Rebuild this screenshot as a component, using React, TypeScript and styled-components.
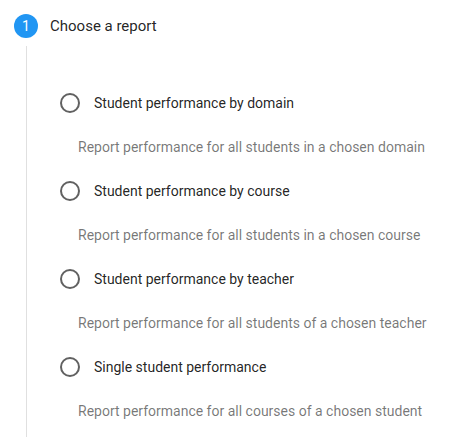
import React from 'react';
import styled, { createGlobalStyle } from 'styled-components';

const GlobalStyle = createGlobalStyle`
  html, body {
    margin: 0;
    padding: 0;
    background: #ffffff;
    font-family: Roboto, "Noto Sans", Arial, sans-serif;
  }
`;

const Stepper = styled.div`
  width: 449px;
  height: 437px;
  overflow: hidden;
  display: flex;
  flex-direction: column;
`;

const StepHeader = styled.div`
  display: flex;
  align-items: center;
  gap: 12px;
  padding: 14px 0 0 14px;
`;

const StepIndex = styled.div`
  width: 24px;
  height: 24px;
  border-radius: 50%;
  background: #2196f3;
  color: #ffffff;
  font-size: 14px;
  display: flex;
  align-items: center;
  justify-content: center;
`;

const StepTitle = styled.div`
  font-size: 15px;
  color: rgba(0, 0, 0, 0.87);
`;

const StepContent = styled.div`
  flex: 1;
  margin: 8px 0 0 26px;
  border-left: 1px solid #e0e0e0;
  padding: 37px 0 16px 33px;
  display: flex;
  flex-direction: column;
`;

const Option = styled.div`
  display: flex;
  flex-direction: column;
  margin-bottom: 14px;
`;

const RadioRow = styled.label`
  height: 40px;
  display: flex;
  align-items: center;
  gap: 14px;
  cursor: pointer;
`;

const RadioCircle = styled.span`
  box-sizing: border-box;
  width: 20px;
  height: 20px;
  border-radius: 50%;
  border: 2px solid #616161;
`;

const RadioLabel = styled.span`
  font-size: 14px;
  color: rgba(0, 0, 0, 0.87);
`;

const Description = styled.div`
  margin-top: 14px;
  padding-left: 18px;
  line-height: 20px;
  font-size: 14px;
  color: rgba(0, 0, 0, 0.54);
`;

const reports = [
  {
    label: 'Student performance by domain',
    text: 'Report performance for all students in a chosen domain',
  },
  {
    label: 'Student performance by course',
    text: 'Report performance for all students in a chosen course',
  },
  {
    label: 'Student performance by teacher',
    text: 'Report performance for all students of a chosen teacher',
  },
  {
    label: 'Single student performance',
    text: 'Report performance for all courses of a chosen student',
  },
];

const App: React.FC = () => {
  return (
    <>
      <GlobalStyle />
      <Stepper>
        <StepHeader>
          <StepIndex>1</StepIndex>
          <StepTitle>Choose a report</StepTitle>
        </StepHeader>
        <StepContent>
          {reports.map((r) => (
            <Option key={r.label}>
              <RadioRow>
                <RadioCircle />
                <RadioLabel>{r.label}</RadioLabel>
              </RadioRow>
              <Description>{r.text}</Description>
            </Option>
          ))}
        </StepContent>
      </Stepper>
    </>
  );
};

export default App;
